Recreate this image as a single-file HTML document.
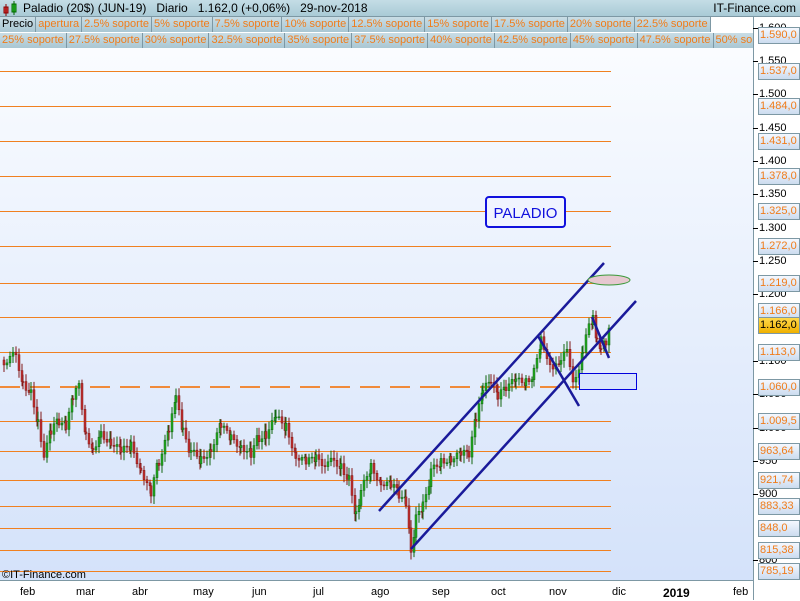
<!DOCTYPE html><html><head><meta charset="utf-8"><style>
body{margin:0;width:800px;height:600px;overflow:hidden;font-family:"Liberation Sans",sans-serif;position:relative;background:#fff}
.hdr{position:absolute;left:0;top:0;width:800px;height:16px;background:linear-gradient(#c4dde6,#a9cad6);border-bottom:1px solid #7d98a4;font-size:12px}
.row{position:absolute;left:0;height:16px;font-size:11px;white-space:nowrap;overflow:hidden;width:753px}
.row span{display:inline-block;height:15px;line-height:15px;padding:0 2px 0 2px;background:linear-gradient(#c9dde5,#aac7d3);border-right:1px solid #7d98a4;color:#f07c1a}
.lab{position:absolute;left:758px;width:39px;height:15px;border:1px solid #7d98a4;background:linear-gradient(#f4f8ff,#ccdcef);color:#f07c1a;font-size:11px;line-height:15px;padding-left:1px;white-space:nowrap;overflow:hidden}
.tk{position:absolute;left:759px;font-size:11px;color:#000;line-height:12px}
.dt{position:absolute;top:586px;font-size:11px}
</style></head><body>
<div style="position:absolute;left:0;top:48px;width:753px;height:532px;background:linear-gradient(#fafcff,#d4e2fa)"></div>
<div style="position:absolute;left:753px;top:16px;width:47px;height:584px;background:#fff;border-left:1px solid #7d98a4"></div>
<div style="position:absolute;left:0;top:580px;width:753px;height:20px;background:#fff;border-top:1px solid #7d98a4"></div>
<div class="hdr"><svg width="18" height="16" style="position:absolute;left:2px;top:1px"><rect x="2" y="6" width="4" height="6" fill="#e04040" stroke="#800" stroke-width="1"/><line x1="4" y1="3" x2="4" y2="15" stroke="#800"/><rect x="10" y="3" width="4" height="8" fill="#3c3" stroke="#060"/><line x1="12" y1="0" x2="12" y2="14" stroke="#060"/></svg>
<span style="position:absolute;left:23px;top:1px">Paladio (20$) (JUN-19) &nbsp; Diario &nbsp; 1.162,0 (+0,06%) &nbsp; 29-nov-2018</span>
<span style="position:absolute;right:4px;top:1px">IT-Finance.com</span></div>
<div class="row" style="top:17px;width:712px"><span style="color:#000">Precio</span><span>apertura</span><span>2.5% soporte</span><span>5% soporte</span><span>7.5% soporte</span><span>10% soporte</span><span>12.5% soporte</span><span>15% soporte</span><span>17.5% soporte</span><span>20% soporte</span><span>22.5% soporte</span></div>
<div class="row" style="top:33px"><span>25% soporte</span><span>27.5% soporte</span><span>30% soporte</span><span>32.5% soporte</span><span>35% soporte</span><span>37.5% soporte</span><span>40% soporte</span><span>42.5% soporte</span><span>45% soporte</span><span>47.5% soporte</span><span>50% soporte</span></div>
<svg id="ch" width="753" height="532" style="position:absolute;left:0;top:48px" viewBox="0 48 753 532"></svg>
<div id="ax"></div>
<div class="dt" style="left:20px">feb</div><div class="dt" style="left:76px">mar</div><div class="dt" style="left:132px">abr</div><div class="dt" style="left:193px">may</div><div class="dt" style="left:252px">jun</div><div class="dt" style="left:313px">jul</div><div class="dt" style="left:371px">ago</div><div class="dt" style="left:432px">sep</div><div class="dt" style="left:491px">oct</div><div class="dt" style="left:549px">nov</div><div class="dt" style="left:612px">dic</div><div class="dt" style="left:663px;font-weight:bold;font-size:12px">2019</div><div class="dt" style="left:733px">feb</div>
<div style="position:absolute;left:2px;top:569px;font-size:11px">©IT-Finance.com</div>
<script>
var g=document.getElementById('ch'),h='';
var ys=[71,106,141,176,211,246,283,317,352,421,451,480,506,528,550,571];
ys.forEach(function(y){h+='<line x1="0" x2="611" y1="'+y+'.5" y2="'+y+'.5" stroke="#f08020" stroke-width="1"/>';});
h+='<line x1="0" x2="611" y1="387" y2="387" stroke="#f08a3a" stroke-width="2" stroke-dasharray="20,10"/>';
var P=[[3,1100],[15,1105],[22,1070],[30,1050],[37,1010],[43,960],[50,990],[58,1010],[65,1000],[72,1040],[78,1060],[85,990],[92,970],[100,990],[110,980],[120,960],[130,970],[140,940],[150,900],[158,950],[168,990],[175,1040],[182,990],[190,960],[200,950],[210,970],[220,1000],[230,980],[240,975],[250,960],[258,985],[265,990],[275,1010],[285,1000],[295,960],[305,945],[315,950],[330,945],[340,945],[348,920],[355,870],[360,900],[370,940],[380,920],[390,910],[398,900],[405,885],[410,815],[415,860],[422,880],[430,930],[440,950],[450,955],[460,955],[468,960],[475,1010],[482,1050],[490,1070],[497,1040],[505,1060],[515,1065],[525,1070],[533,1080],[540,1130],[546,1110],[552,1080],[560,1100],[566,1110],[572,1075],[578,1080],[582,1110],[588,1150],[592,1160],[596,1125],[600,1110],[605,1130],[610,1160]];
function Y(p){return 260+(1250-p)*0.6667;}
var prev=P[0][1];
for(var i=0;i<P.length-1;i++){var a=P[i],b=P[i+1];for(var x=a[0];x<b[0];x+=3){var t=(x-a[0])/(b[0]-a[0]);var c=a[1]+(b[1]-a[1])*t+Math.sin(x*1.7)*8;var o=prev;var hi=Math.max(o,c)+4+Math.abs(Math.sin(x*3.1))*8,lo=Math.min(o,c)-4-Math.abs(Math.cos(x*2.3))*8;var up=c>=o;var col=up?'#22aa22':'#c03030',st=up?'#116611':'#801818';
h+='<line x1="'+(x+1)+'" x2="'+(x+1)+'" y1="'+Y(hi)+'" y2="'+Y(lo)+'" stroke="'+st+'"/>';var yt=Y(Math.max(o,c)),yb=Y(Math.min(o,c));h+='<rect x="'+x+'" y="'+yt+'" width="2" height="'+Math.max(1,yb-yt)+'" fill="'+col+'" stroke="'+st+'" stroke-width="0.5"/>';prev=c;}}
h+='<g stroke="#1a1a9a" stroke-width="2.5" fill="none"><line x1="379" y1="511" x2="604" y2="263"/><line x1="411" y1="549" x2="636" y2="301"/><line x1="538" y1="336" x2="579" y2="406"/><line x1="592" y1="317" x2="609" y2="358"/></g>';
h+='<rect x="579.5" y="373.5" width="57" height="16" fill="#d8e4fc" stroke="#0000dd"/>';
h+='<ellipse cx="609" cy="280" rx="21" ry="5" fill="#e6c8d0" stroke="#3a9a3a"/>';
h+='<rect x="486" y="197" width="79" height="30" rx="3" fill="#f0f4ff" stroke="#1010dd" stroke-width="2"/><text x="525.5" y="218" text-anchor="middle" font-size="15" fill="#1010dd" font-family="Liberation Sans">PALADIO</text>';
g.innerHTML=h;
var ax='';
[[1500,94],[1450,128],[1400,161],[1350,194],[1300,228],[1250,261],[1200,294],[1100,361],[1050,394],[1000,428],[950,461],[900,494],[800,560],[1600,28],[1550,61]].forEach(function(t){var s=t[0]>=1000?(Math.floor(t[0]/1000)+'.'+String(t[0]%1000).padStart(3,'0')):String(t[0]);ax+='<div class="tk" style="top:'+(t[1]-6)+'px">'+s+'</div><div style="position:absolute;left:753px;width:5px;top:'+t[1]+'px;height:1px;background:#000"></div>';});
[['1.590,0',35],['1.537,0',71],['1.484,0',106],['1.431,0',141],['1.378,0',176],['1.325,0',211],['1.272,0',246],['1.219,0',283],['1.166,0',311],['1.113,0',352],['1.060,0',387],['1.009,5',421],['963,64',451],['921,74',480],['883,33',506],['848,0',528],['815,38',550],['785,19',571]].forEach(function(l){ax+='<div class="lab" style="top:'+(l[1]-8)+'px">'+l[0]+'</div>';});
ax+='<div class="lab" style="top:317px;background:linear-gradient(#ffd84a,#f0b000);color:#000">1.162,0</div>';
document.getElementById('ax').innerHTML=ax;
</script>
</body></html>
